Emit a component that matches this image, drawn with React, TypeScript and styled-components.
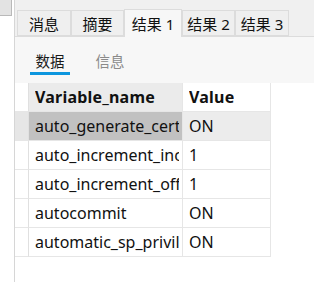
import React from "react";
import styled, { createGlobalStyle } from "styled-components";

const Global = createGlobalStyle`
  html, body { margin: 0; padding: 0; background: #ffffff; }
  body { font-family: "Noto Sans", "Noto Sans CJK SC", sans-serif; }
`;

const Root = styled.div`
  display: flex;
  width: 314px;
  height: 282px;
  overflow: hidden;
  background: #ffffff;
`;

const LeftPane = styled.div`
  width: 14px;
  flex: none;
  background: #ffffff;
  border-right: 1px solid #d6d6d6;
`;

const Handle = styled.div`
  width: 12px;
  height: 16px;
  box-sizing: border-box;
  background: #e3e3e3;
  border-right: 1px solid #b9b9b9;
  border-bottom: 1px solid #b9b9b9;
`;

const Main = styled.div`
  flex: 1;
  display: flex;
  flex-direction: column;
  min-width: 0;
`;

const TabBar = styled.div`
  height: 37px;
  box-sizing: border-box;
  display: flex;
  align-items: flex-end;
  padding-left: 2px;
  background: #f0f0f0;
  border-bottom: 1px solid #dcdcdc;
`;

const Tab = styled.div<{ $active?: boolean; $w: number }>`
  box-sizing: border-box;
  width: ${(p) => p.$w}px;
  height: ${(p) => (p.$active ? "28px" : "26px")};
  margin-bottom: ${(p) => (p.$active ? "-1px" : "0")};
  display: flex;
  align-items: center;
  justify-content: center;
  font-family: "Noto Sans", "Noto Sans CJK SC", sans-serif;
  font-size: 15px;
  color: #111111;
  background: ${(p) => (p.$active ? "#f7f7f7" : "#efefef")};
  border: 1px solid #dcdcdc;
  border-bottom: ${(p) => (p.$active ? "none" : "1px solid #dcdcdc")};
  white-space: nowrap;
  padding-top: ${(p) => (p.$active ? "0" : "0")};
`;

const SubTabs = styled.div`
  height: 46px;
  box-sizing: border-box;
  background: #f7f7f7;
  display: flex;
  align-items: flex-end;
  padding-left: 15px;
  gap: 20px;
`;

const SubTab = styled.div<{ $active?: boolean }>`
  width: 40px;
  height: 38px;
  box-sizing: border-box;
  display: flex;
  align-items: center;
  justify-content: center;
  font-family: "Noto Sans CJK SC", sans-serif;
  font-size: 14.5px;
  color: ${(p) => (p.$active ? "#1a1a1a" : "#8a8a8a")};
  border-bottom: 3px solid ${(p) => (p.$active ? "#0d96de" : "transparent")};
  margin-bottom: 8px;
  padding-top: 11px;
`;

const TableArea = styled.div`
  flex: 1;
  background: #ffffff;
`;

const Grid = styled.div`
  display: grid;
  grid-template-columns: 14px 154px 88px;
  grid-auto-rows: 29px;
`;

const Cell = styled.div<{ $bg?: string; $bold?: boolean }>`
  box-sizing: border-box;
  display: flex;
  align-items: center;
  padding-left: 6px;
  padding-right: 3px;
  overflow: hidden;
  white-space: nowrap;
  font-family: "Noto Sans", "Noto Sans CJK SC", sans-serif;
  font-size: 16px;
  font-weight: ${(p) => (p.$bold ? 700 : 400)};
  letter-spacing: ${(p) => (p.$bold ? "0.2px" : "0")};
  color: #111111;
  background: ${(p) => p.$bg || "#ffffff"};
  border-right: 1px solid #e6e6e6;
  border-bottom: 1px solid #e6e6e6;
`;

const CellText = styled.span`
  display: block;
  overflow: hidden;
  white-space: nowrap;
`;

const RowHead = styled.div<{ $sel?: boolean }>`
  box-sizing: border-box;
  background: ${(p) => (p.$sel ? "#e6e6e6" : "#ffffff")};
  border-right: 1px solid #e0e0e0;
  border-bottom: 1px solid #e6e6e6;
`;

const rows: [string, string][] = [
  ["auto_generate_certs", "ON"],
  ["auto_increment_increment", "1"],
  ["auto_increment_offset", "1"],
  ["autocommit", "ON"],
  ["automatic_sp_privileges", "ON"],
];

const tabs: [string, number, boolean][] = [
  ["消息", 54, false],
  ["摘要", 53, false],
  ["结果 1", 58, true],
  ["结果 2", 53, false],
  ["结果 3", 54, false],
];

export default function App() {
  return (
    <Root>
      <Global />
      <LeftPane>
        <Handle />
      </LeftPane>
      <Main>
        <TabBar>
          {tabs.map(([label, w, active]) => (
            <Tab key={label} $w={w} $active={active}>
              {label}
            </Tab>
          ))}
        </TabBar>
        <SubTabs>
          <SubTab $active>数据</SubTab>
          <SubTab>信息</SubTab>
        </SubTabs>
        <TableArea>
          <Grid>
            <RowHead />
            <Cell $bold $bg="#ebebeb">
              <CellText>Variable_name</CellText>
            </Cell>
            <Cell $bold>
              <CellText>Value</CellText>
            </Cell>
            {rows.map(([k, v], i) => (
              <React.Fragment key={k}>
                <RowHead $sel={i === 0} />
                <Cell $bg={i === 0 ? "#c1c1c1" : undefined}>
                  <CellText>{k}</CellText>
                </Cell>
                <Cell $bg={i === 0 ? "#ececec" : undefined}>
                  <CellText>{v}</CellText>
                </Cell>
              </React.Fragment>
            ))}
          </Grid>
        </TableArea>
      </Main>
    </Root>
  );
}
